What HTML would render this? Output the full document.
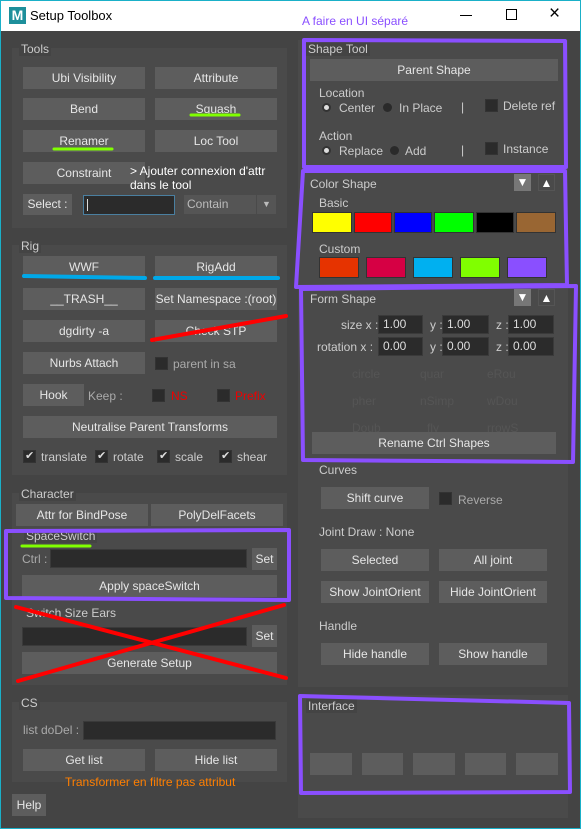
<!DOCTYPE html>
<html><head><meta charset="utf-8"><style>
*{margin:0;padding:0;box-sizing:border-box}
body{width:581px;height:829px;overflow:hidden;background:#444;font-family:"Liberation Sans",sans-serif;font-size:12px;color:#d8d8d8;position:relative}
div,span{position:absolute}
.tb{left:0;top:0;width:581px;height:31px;background:#fff;border:1px solid #1ab0c8;border-bottom:none}
.pn{background:#4a4a4a}
.lb{background:#444;padding:0 2px;line-height:14px;color:#ccc}
.b{background:#5d5d5d;color:#e6e6e6;text-align:center;line-height:22px;height:22px}
.in{background:#2b2b2b;border:1px solid #3a3a3a}
.t{white-space:nowrap;color:#ccc;line-height:14px}
.cb{width:13px;height:13px;background:#2b2b2b;border:1px solid #333}
.ck::after{content:"✔";position:absolute;left:1px;top:-2px;font-size:11px;color:#ddd}
.rd{width:9px;height:9px;border-radius:50%;background:#2a2a2a}
.rd.on{background:#ddd;border:2px solid #333}
.sw{height:21px;border:1px solid #333}
.ar{width:17px;height:17px;text-align:center;line-height:17px;font-size:12px;color:#fff}
</style></head><body>
<div style="left:0;top:0;width:1px;height:829px;background:#1ab0c8"></div>
<div style="right:0;top:0;width:1px;height:829px;background:#1ab0c8"></div>
<div style="left:0;bottom:0;width:581px;height:1px;background:#1ab0c8"></div>
<div class="tb"></div>
<div style="left:9px;top:7px;width:17px;height:17px;color:#fff;font-weight:bold;font-size:14px;line-height:17px;text-align:center;background:#1d8f9b">M</div>
<span style="left:30px;top:8px;color:#000;font-size:13px">Setup Toolbox</span>
<span style="left:302px;top:14px;color:#8a4fff;font-size:12px">A faire en UI séparé</span>
<div style="left:460px;top:15px;width:12px;height:1px;background:#000"></div>
<div style="left:506px;top:9px;width:11px;height:11px;border:1px solid #000"></div>
<span style="left:549px;top:3px;color:#000;font-size:19px;font-weight:300">×</span>

<div class="pn" style="left:12px;top:48px;width:275px;height:180px"></div>
<span class="lb" style="left:19px;top:42px">Tools</span>
<div class="b" style="left:23px;top:67px;width:122px">Ubi Visibility</div>
<div class="b" style="left:155px;top:67px;width:122px">Attribute</div>
<div class="b" style="left:23px;top:98px;width:122px">Bend</div>
<div class="b" style="left:155px;top:98px;width:122px">Squash</div>
<div class="b" style="left:23px;top:130px;width:122px">Renamer</div>
<div class="b" style="left:155px;top:130px;width:122px">Loc Tool</div>
<div class="b" style="left:23px;top:162px;width:122px">Constraint</div>
<span style="left:130px;top:164px;color:#fff;line-height:14px;font-size:12px">&gt; Ajouter connexion d'attr<br>dans le tool</span>
<div class="b" style="left:23px;top:194px;width:49px;height:21px;line-height:21px">Select :</div>
<div class="in" style="left:83px;top:195px;width:92px;height:20px;border-color:#4a7fa0"></div>
<div style="left:87px;top:199px;width:1px;height:12px;background:#ddd"></div>
<div style="left:184px;top:195px;width:72px;height:19px;background:#555;color:#bbb;line-height:19px;padding-left:3px">Contain</div>
<div style="left:257px;top:195px;width:19px;height:19px;background:#555;color:#bbb;font-size:9px;text-align:center;line-height:19px">▼</div>

<div class="pn" style="left:12px;top:245px;width:275px;height:230px"></div>
<span class="lb" style="left:19px;top:239px">Rig</span>
<div class="b" style="left:23px;top:256px;width:122px">WWF</div>
<div class="b" style="left:155px;top:256px;width:122px">RigAdd</div>
<div class="b" style="left:23px;top:288px;width:122px">__TRASH__</div>
<div class="b" style="left:155px;top:288px;width:122px">Set Namespace :(root)</div>
<div class="b" style="left:23px;top:320px;width:122px">dgdirty -a</div>
<div class="b" style="left:155px;top:320px;width:122px">Check STP</div>
<div class="b" style="left:23px;top:352px;width:122px">Nurbs Attach</div>
<div class="cb" style="left:155px;top:357px"></div><span class="t" style="left:173px;top:357px;color:#aaa">parent in sa</span>
<div class="b" style="left:23px;top:384px;width:61px">Hook</div>
<span class="t" style="left:88px;top:389px;color:#aaa">Keep :</span>
<div class="cb" style="left:152px;top:389px"></div><span class="t" style="left:171px;top:389px;color:#e00">NS</span>
<div class="cb" style="left:217px;top:389px"></div><span class="t" style="left:235px;top:389px;color:#e00">Prefix</span>
<div class="b" style="left:23px;top:416px;width:254px">Neutralise Parent Transforms</div>
<div class="cb ck" style="left:23px;top:450px"></div><span class="t" style="left:41px;top:450px">translate</span>
<div class="cb ck" style="left:95px;top:450px"></div><span class="t" style="left:113px;top:450px">rotate</span>
<div class="cb ck" style="left:157px;top:450px"></div><span class="t" style="left:175px;top:450px">scale</span>
<div class="cb ck" style="left:219px;top:450px"></div><span class="t" style="left:237px;top:450px">shear</span>

<div class="pn" style="left:12px;top:493px;width:275px;height:192px"></div>
<span class="lb" style="left:19px;top:487px">Character</span>
<div class="b" style="left:16px;top:504px;width:132px">Attr for BindPose</div>
<div class="b" style="left:151px;top:504px;width:132px">PolyDelFacets</div>
<span class="lb" style="left:24px;top:529px">SpaceSwitch</span>
<span class="t" style="left:22px;top:552px;color:#aaa">Ctrl :</span>
<div class="in" style="left:50px;top:549px;width:197px;height:19px"></div>
<div class="b" style="left:252px;top:548px;width:25px">Set</div>
<div class="b" style="left:22px;top:575px;width:255px">Apply spaceSwitch</div>
<span class="t" style="left:26px;top:606px">Switch Size Ears</span>
<div class="in" style="left:22px;top:627px;width:225px;height:19px"></div>
<div class="b" style="left:252px;top:625px;width:25px">Set</div>
<div class="b" style="left:22px;top:652px;width:255px">Generate Setup</div>

<div class="pn" style="left:12px;top:702px;width:275px;height:80px"></div>
<span class="lb" style="left:19px;top:696px">CS</span>
<span class="t" style="left:23px;top:723px;color:#aaa">list doDel :</span>
<div class="in" style="left:83px;top:721px;width:193px;height:19px"></div>
<div class="b" style="left:23px;top:749px;width:122px">Get list</div>
<div class="b" style="left:155px;top:749px;width:122px">Hide list</div>
<span class="t" style="left:65px;top:775px;color:#ff7f00">Transformer en filtre pas attribut</span>
<div class="b" style="left:12px;top:794px;width:34px">Help</div>

<div class="pn" style="left:298px;top:40px;width:270px;height:647px"></div>
<span class="lb" style="left:306px;top:42px">Shape Tool</span>
<div class="b" style="left:310px;top:59px;width:248px">Parent Shape</div>
<span class="t" style="left:319px;top:86px">Location</span>
<div class="rd on" style="left:322px;top:103px"></div><span class="t" style="left:339px;top:101px">Center</span>
<div class="rd" style="left:383px;top:103px"></div><span class="t" style="left:399px;top:101px">In Place</span>
<span class="t" style="left:461px;top:100px">|</span>
<div class="cb" style="left:485px;top:99px"></div><span class="t" style="left:503px;top:99px">Delete ref</span>
<span class="t" style="left:319px;top:129px">Action</span>
<div class="rd on" style="left:322px;top:146px"></div><span class="t" style="left:339px;top:144px">Replace</span>
<div class="rd" style="left:390px;top:146px"></div><span class="t" style="left:405px;top:144px">Add</span>
<span class="t" style="left:461px;top:143px">|</span>
<div class="cb" style="left:485px;top:142px"></div><span class="t" style="left:503px;top:142px">Instance</span>

<span class="t" style="left:310px;top:177px">Color Shape</span>
<div class="ar" style="left:514px;top:174px;background:#777">▼</div>
<div class="ar" style="left:538px;top:174px;border:1px solid #555">▲</div>
<span class="t" style="left:319px;top:196px">Basic</span>
<div class="sw" style="left:312px;top:212px;width:40px;background:#ff0"></div>
<div class="sw" style="left:354px;top:212px;width:38px;background:#f00"></div>
<div class="sw" style="left:394px;top:212px;width:38px;background:#00f"></div>
<div class="sw" style="left:434px;top:212px;width:40px;background:#0f0"></div>
<div class="sw" style="left:476px;top:212px;width:38px;background:#000"></div>
<div class="sw" style="left:516px;top:212px;width:40px;background:#996633"></div>
<span class="t" style="left:319px;top:242px">Custom</span>
<div class="sw" style="left:319px;top:257px;width:40px;background:#e63300"></div>
<div class="sw" style="left:366px;top:257px;width:40px;background:#d60044"></div>
<div class="sw" style="left:413px;top:257px;width:40px;background:#00b0f0"></div>
<div class="sw" style="left:460px;top:257px;width:40px;background:#80ff00"></div>
<div class="sw" style="left:507px;top:257px;width:40px;background:#8a4fff"></div>

<span class="t" style="left:310px;top:292px">Form Shape</span>
<div class="ar" style="left:514px;top:289px;background:#777">▼</div>
<div class="ar" style="left:538px;top:289px;border:1px solid #555">▲</div>
<span class="t" style="left:341px;top:318px">size x :</span>
<div class="in" style="left:378px;top:315px;width:45px;height:19px;color:#ddd;padding-left:4px;line-height:17px">1.00</div>
<span class="t" style="left:430px;top:318px">y :</span>
<div class="in" style="left:442px;top:315px;width:47px;height:19px;color:#ddd;padding-left:4px;line-height:17px">1.00</div>
<span class="t" style="left:496px;top:318px">z :</span>
<div class="in" style="left:508px;top:315px;width:46px;height:19px;color:#ddd;padding-left:4px;line-height:17px">1.00</div>
<span class="t" style="left:317px;top:340px">rotation x :</span>
<div class="in" style="left:378px;top:337px;width:45px;height:19px;color:#ddd;padding-left:4px;line-height:17px">0.00</div>
<span class="t" style="left:430px;top:340px">y :</span>
<div class="in" style="left:442px;top:337px;width:47px;height:19px;color:#ddd;padding-left:4px;line-height:17px">0.00</div>
<span class="t" style="left:496px;top:340px">z :</span>
<div class="in" style="left:508px;top:337px;width:46px;height:19px;color:#ddd;padding-left:4px;line-height:17px">0.00</div>
<span class="t" style="left:352px;top:367px;color:#555">circle</span><span class="t" style="left:420px;top:367px;color:#555">quar</span><span class="t" style="left:487px;top:367px;color:#555">eRou</span>
<span class="t" style="left:352px;top:394px;color:#555">pher</span><span class="t" style="left:420px;top:394px;color:#555">nSimp</span><span class="t" style="left:487px;top:394px;color:#555">wDou</span>
<span class="t" style="left:352px;top:421px;color:#555">Doub</span><span class="t" style="left:427px;top:421px;color:#555">fly</span><span class="t" style="left:487px;top:421px;color:#555">rrowS</span>
<div class="b" style="left:312px;top:432px;width:244px">Rename Ctrl Shapes</div>

<span class="t" style="left:319px;top:463px">Curves</span>
<div class="b" style="left:321px;top:487px;width:108px">Shift curve</div>
<div class="cb" style="left:439px;top:492px"></div><span class="t" style="left:458px;top:493px;color:#aaa">Reverse</span>
<span class="t" style="left:319px;top:525px">Joint Draw : None</span>
<div class="b" style="left:321px;top:549px;width:108px">Selected</div>
<div class="b" style="left:439px;top:549px;width:108px">All joint</div>
<div class="b" style="left:321px;top:581px;width:108px">Show JointOrient</div>
<div class="b" style="left:439px;top:581px;width:108px">Hide JointOrient</div>
<span class="t" style="left:319px;top:619px">Handle</span>
<div class="b" style="left:321px;top:643px;width:108px">Hide handle</div>
<div class="b" style="left:439px;top:643px;width:108px">Show handle</div>

<div class="pn" style="left:298px;top:695px;width:270px;height:123px"></div>
<span class="lb" style="left:306px;top:699px">Interface</span>
<div class="b" style="left:310px;top:753px;width:42px"></div>
<div class="b" style="left:362px;top:753px;width:41px"></div>
<div class="b" style="left:413px;top:753px;width:42px"></div>
<div class="b" style="left:465px;top:753px;width:41px"></div>
<div class="b" style="left:516px;top:753px;width:42px"></div>

<svg style="position:absolute;left:0;top:0" width="581" height="829">
<g stroke="#80ff00" stroke-width="3" stroke-linecap="round">
<line x1="191" y1="115" x2="239" y2="115"/><line x1="54" y1="149" x2="112" y2="149"/><line x1="22" y1="546" x2="90" y2="546"/></g>
<g stroke="#00a8e8" stroke-width="4" stroke-linecap="round">
<line x1="24" y1="276" x2="145" y2="278"/><line x1="155" y1="278" x2="278" y2="278"/></g>
<g stroke="#f00" stroke-width="4" stroke-linecap="round">
<line x1="152" y1="340" x2="286" y2="316"/><line x1="16" y1="607" x2="286" y2="678"/><line x1="18" y1="681" x2="284" y2="605"/></g>
<g stroke="#8a4fff" stroke-width="4" fill="none" stroke-linejoin="round">
<path d="M304 40 L565 41 L566 167 L304 167 Z"/>
<path d="M303 171 L565 171 L567 285 L296 287 Z"/>
<path d="M301 289 L576 286 L573 462 L303 460 Z"/>
<path d="M6 531 L289 530 L289 600 L6 598 Z"/>
<path d="M300 696 L569 703 L570 792 L301 793 Z"/>
</g>
</svg>
</body></html>
